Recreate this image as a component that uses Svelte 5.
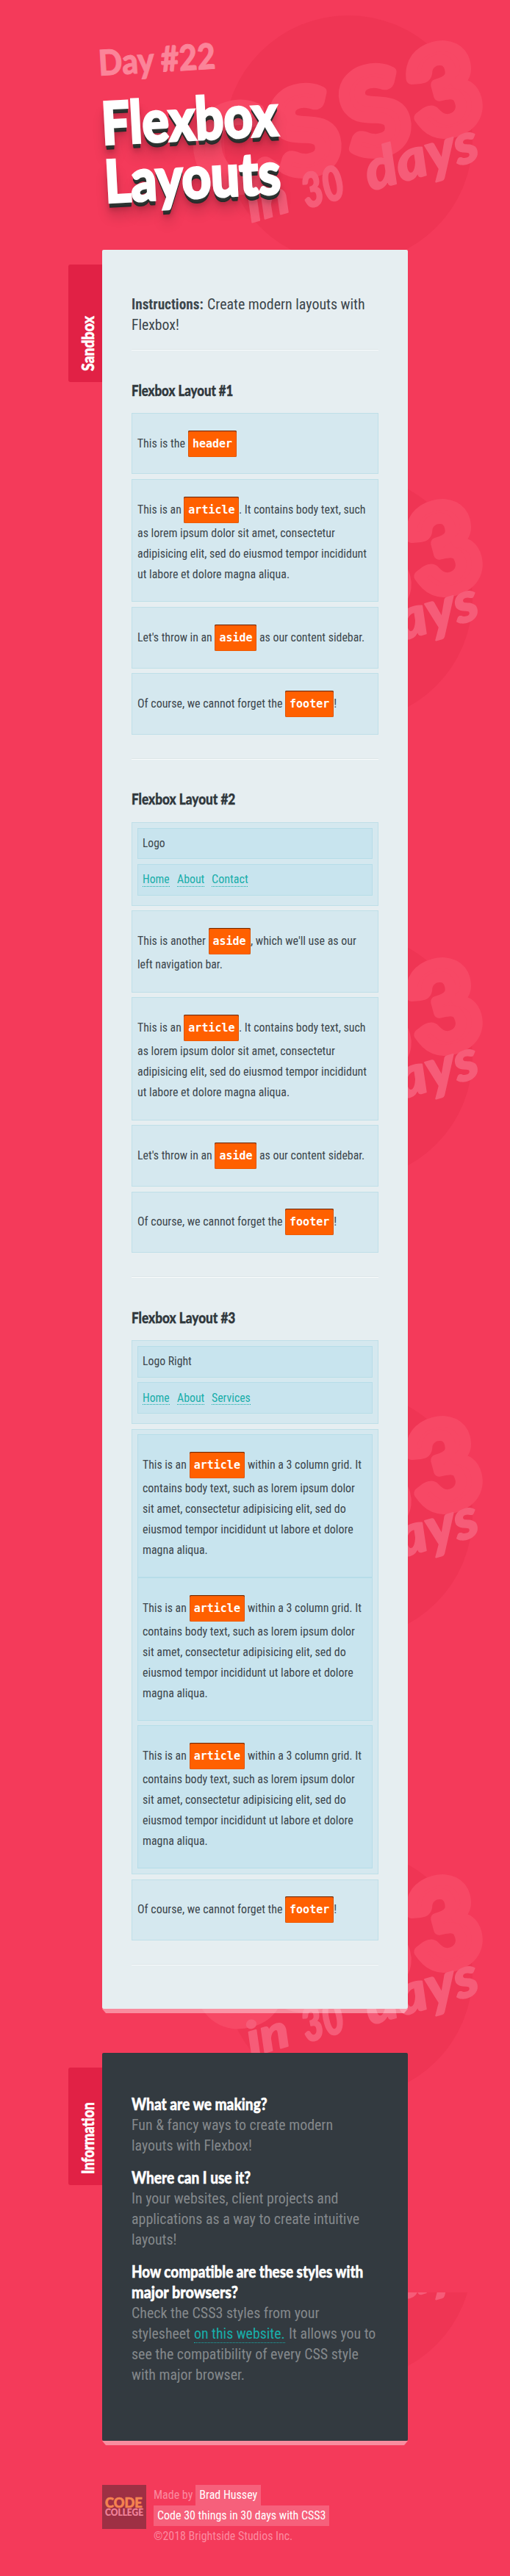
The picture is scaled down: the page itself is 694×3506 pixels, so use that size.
<script lang="ts">
  // Squeezes a run of text to a given width while it stays in the line's flow.
  function fit(node: HTMLElement, width: number) {
    const natural = node.offsetWidth;
    if (!natural) return;
    node.style.transform = `scaleX(${width / natural})`;
    node.style.marginRight = `${width - natural}px`;
  }

  const tiles = [0, 624, 1248, 1872, 2496];

  const article = [
    ['as lorem ipsum dolor sit amet, consectetur', 269],
    ['adipisicing elit, sed do eiusmod tempor incididunt', 312.5],
    ['ut labore et dolore magna aliqua.', 207]
  ];
  const column = [
    ['contains body text, such as lorem ipsum dolor', 289],
    ['sit amet, consectetur adipisicing elit, sed do', 277],
    ['eiusmod tempor incididunt ut labore et dolore', 287],
    ['magna aliqua.', 88.5]
  ];
</script>

{#snippet lead(before, w1, tag, after, w2, gap)}
  <div class="lead">
    <span class="run" use:fit={w1}>{before}</span>
    <code style:width="{tag.length * 9 + 12}px">{tag}</code>
    {#if after}<span class="run" class:gap use:fit={w2}>{after}</span>{/if}
  </div>
{/snippet}

{#snippet lines(list)}
  {#each list as [text, w]}
    <div class="line"><span class="run" use:fit={w}>{text}</span></div>
  {/each}
{/snippet}

{#snippet navHeader(logo, logoW, last, lastW)}
  <div class="box">
    <div class="inner spaced"><div class="line"><span class="run" use:fit={logoW}>{logo}</span></div></div>
    <div class="inner spaced">
      <div class="line nav">
        <a href="#home"><span class="run" use:fit={37}>Home</span></a>
        <a href="#about"><span class="run" use:fit={37.6}>About</span></a>
        <a href="#last"><span class="run" use:fit={lastW}>{last}</span></a>
      </div>
    </div>
  </div>
{/snippet}

{#snippet articleBox()}
  <div class="box text">
    {@render lead('This is an', 60, 'article', '. It contains body text, such', 172, false)}
    {@render lines(article)}
  </div>
{/snippet}

{#snippet asideBox()}
  <div class="box text">
    {@render lead("Let's throw in an", 102, 'aside', 'as our content sidebar.', 143.7, true)}
  </div>
{/snippet}

{#snippet footerBox()}
  <div class="box text">
    {@render lead('Of course, we cannot forget the', 197.3, 'footer', '!', 4, false)}
  </div>
{/snippet}

{#snippet badge()}
  <circle cx="474" cy="190" r="169" fill="#ef3554" />
  <g class="big">
    <text transform="translate(282 270) rotate(-15)">C</text>
    <text transform="translate(388 243) rotate(-15)">S</text>
    <text transform="translate(483 216) rotate(-15)">S</text>
    <text class="three" transform="translate(574 190) rotate(-15)">3</text>
  </g>
  <g class="script">
    <text transform="translate(342 303) rotate(-16)" textLength="58" lengthAdjust="spacingAndGlyphs">in</text>
    <text transform="translate(417 284) rotate(-16)" textLength="58" lengthAdjust="spacingAndGlyphs">30</text>
    <text class="days" transform="translate(504 260) rotate(-16)" textLength="158" lengthAdjust="spacingAndGlyphs">days</text>
  </g>
{/snippet}

<div class="page">
  <svg class="backdrop" width="694" height="3506" viewBox="0 0 694 3506" aria-hidden="true">
    <defs><clipPath id="tail"><rect x="0" y="3120" width="694" height="386" /></clipPath></defs>
    {#each tiles as y}
      <g transform="translate(0 {y})">{@render badge()}</g>
    {/each}
    <g clip-path="url(#tail)"><g transform="translate(0 2882)">{@render badge()}</g></g>
  </svg>

  <header>
    <div class="day"><span class="run" use:fit={159}>Day #22</span></div>
    <h1>
      <span class="row"><span class="run" use:fit={240}>Flexbox</span></span>
      <span class="row second"><span class="run" use:fit={240}>Layouts</span></span>
    </h1>
  </header>

  <section class="card sandbox">
    <div class="tab"><span class="run" use:fit={75}>Sandbox</span></div>
    <div class="intro">
      <div class="line"><b class="run" use:fit={98}>Instructions:</b><span class="run after" use:fit={215}>Create modern layouts with</span></div>
      <div class="line"><span class="run" use:fit={65}>Flexbox!</span></div>
    </div>
    <hr />

    <h2><span class="run" use:fit={138}>Flexbox Layout #1</span></h2>
    <div class="box text">{@render lead('This is the', 65, 'header', '', 0, false)}</div>
    {@render articleBox()}
    {@render asideBox()}
    {@render footerBox()}
    <hr class="rule" />

    <h2><span class="run" use:fit={141}>Flexbox Layout #2</span></h2>
    {@render navHeader('Logo', 31, 'Contact', 49.3)}
    <div class="box text">
      {@render lead('This is another', 93.2, 'aside', ", which we'll use as our", 143.3, false)}
      {@render lines([['left navigation bar.', 116.3]])}
    </div>
    {@render articleBox()}
    {@render asideBox()}
    {@render footerBox()}
    <hr class="rule" />

    <h2><span class="run" use:fit={141}>Flexbox Layout #3</span></h2>
    {@render navHeader('Logo Right', 67, 'Services', 53.3)}
    <div class="box">
      {#each [0, 1, 2] as i}
        <div class="inner text" class:last={i === 2}>
          {@render lead('This is an', 60, 'article', 'within a 3 column grid. It', 155, true)}
          {@render lines(column)}
        </div>
      {/each}
    </div>
    {@render footerBox()}
    <hr class="rule" />
  </section>

  <section class="card info">
    <div class="tab"><span class="run" use:fit={98}>Information</span></div>
    <h3><span class="run" use:fit={185}>What are we making?</span></h3>
    {@render lines([['Fun & fancy ways to create modern', 274.5], ['layouts with Flexbox!', 163.7]])}
    <h3><span class="run" use:fit={161.7}>Where can I use it?</span></h3>
    {@render lines([['In your websites, client projects and', 281], ['applications as a way to create intuitive', 310], ['layouts!', 61.5]])}
    <h3><span class="run" use:fit={315}>How compatible are these styles with</span></h3>
    <h3 class="cont"><span class="run" use:fit={144.5}>major browsers?</span></h3>
    {@render lines([['Check the CSS3 styles from your', 255.3]])}
    <div class="line site">
      <span class="run" use:fit={80}>stylesheet</span>
      <a href="#site"><span class="run" use:fit={124}>on this website.</span></a>
      <span class="run" use:fit={118}>It allows you to</span>
    </div>
    {@render lines([['see the compatibility of every CSS style', 309], ['with major browser.', 154]])}
  </section>

  <footer>
    <div class="logo">
      <div class="code"><span class="run" use:fit={51}>CODE</span></div>
      <div class="college"><span class="run" use:fit={52}>COLLEGE</span></div>
    </div>
    <div class="credits">
      <div class="line"><span class="run" use:fit={53}>Made by</span><span class="chip made"><span class="run" use:fit={79}>Brad Hussey</span></span></div>
      <div class="line"><span class="chip"><span class="run" use:fit={229.6}>Code 30 things in 30 days with CSS3</span></span></div>
      <div class="line"><span class="run" use:fit={189}>©2018 Brightside Studios Inc.</span></div>
    </div>
  </footer>
</div>

<style>
  :global(body) { margin: 0; background: #f43a5a; }
  .page {
    position: relative;
    box-sizing: border-box;
    height: 3506px;
    overflow: hidden;
    background: #f43a5a;
    font-family: 'Roboto Condensed', Roboto, sans-serif;
    font-stretch: 75%;
    color: #3c464c;
  }
  .backdrop { position: absolute; left: 0; top: 0; }
  .big { fill: #f74865; stroke: #f74865; stroke-width: 15px; stroke-linejoin: round; font: 900 154px Lato, sans-serif; }
  .three { font-size: 160px; }
  .script { fill: #f65c78; stroke: #f65c78; stroke-width: 2px; stroke-linejoin: round; font: italic 900 64px Lato, sans-serif; }
  .days { font-size: 76px; }
  .run { display: inline-block; white-space: nowrap; transform-origin: 0 0; }

  header { position: relative; height: 340px; box-sizing: border-box; padding: 57px 0 0 135px; font-family: Lato, sans-serif; font-weight: 900; }
  .day { height: 56px; line-height: 56px; font-size: 48px; color: #fb8499; -webkit-text-stroke: 1px #fb8499; transform: rotate(-3.5deg); transform-origin: 0 80%; }
  h1 {
    margin: 14px 0 0 5px;
    font-size: 80px;
    line-height: 79px;
    font-weight: 900;
    color: #fff;
    -webkit-text-stroke: 3px #fff;
    transform: rotate(-3deg);
    transform-origin: 0 50%;
    text-shadow: 0 1px 0 #2e3532, 0 2px 0 #2e3532, 0 3px 0 #2e3532, 0 4px 0 #2e3532, 0 5px 0 #2b312f, 0 6px 0 #292e2d, 0 7px 0 #262a29, 0 10px 8px rgba(0, 0, 0, .2), 0 18px 18px rgba(0, 0, 0, .2);
  }
  .row { display: block; height: 79px; }

  .card { position: relative; box-sizing: border-box; width: 416px; margin-left: 139px; padding: 0 40px; border-radius: 2px; }
  .card::after {
    content: '';
    position: absolute;
    left: 0; right: 0; top: 100%;
    height: 6px;
    background: rgba(255, 255, 255, .42);
    clip-path: polygon(0 0, 100% 0, calc(100% - 5px) 100%, 5px 100%);
  }
  .sandbox { height: 2394px; padding-top: 60px; background: #e6eef1; }
  .info { height: 528px; margin-top: 60px; padding-top: 56px; background: #333a40; color: #84888b; font-size: 20px; }
  .tab {
    position: absolute;
    left: -46px; top: 180px;
    width: 160px; height: 46px;
    box-sizing: border-box;
    padding: 13px 0 0 15px;
    border-radius: 3px 3px 0 0;
    background: #e12145;
    transform: rotate(-90deg);
    transform-origin: 0 0;
    color: #fff;
    font: 900 22px/28px Lato, sans-serif;
    -webkit-text-stroke: .6px #fff;
  }

  .line { height: 28px; line-height: 28px; display: flex; white-space: nowrap; }
  .intro { font-size: 20px; }
  .after { margin-left: 5px; }
  hr { height: 0; margin: 19px 0 0; border: 0; border-top: 1px solid #dde5e8; border-bottom: 1px solid #f9fbfc; }
  .rule { margin-top: 32.4px; }
  h2 { height: 28px; margin: 39.5px 0 17.5px; font: 900 20px/28px Lato, sans-serif; color: #2f373c; -webkit-text-stroke: .4px #2f373c; }
  .box { box-sizing: border-box; margin-bottom: 6.7px; padding: 6.7px; border: 1px solid #bfdfe8; background: #d5e8ef; font-size: 16px; }
  .box.text { padding: 22.7px 6.7px; }
  .inner { padding: 6.4px; border: 1px solid #b6dde8; background: #c8e4ee; }
  .inner.spaced { margin-bottom: 6.4px; }
  .inner.text { padding: 22.4px 6.4px; }
  .inner.last { margin-top: 6.4px; }
  .lead { display: flex; align-items: baseline; height: 36px; line-height: 28px; white-space: nowrap; }
  code {
    box-sizing: border-box;
    height: 36px;
    margin-left: 4px;
    padding-top: 1px;
    border-radius: 2px;
    background: #ff6000;
    box-shadow: inset 0 0 1px rgba(0, 0, 0, .6), inset 0 1px 1px rgba(0, 0, 0, .6);
    color: #fff;
    font: 700 15px/35px 'DejaVu Sans Mono', monospace;
    font-stretch: normal;
    text-align: center;
  }
  .gap { margin-left: 4px; }
  a { color: #18aeaa; text-decoration: none; }
  .nav { gap: 10px; }
  .nav a { height: 22.5px; border-bottom: 1px dotted #18aeaa; }

  h3 { height: 28px; margin: 16px 0 0; font: 900 22px/28px Lato, sans-serif; color: #fff; -webkit-text-stroke: .5px #fff; }
  .tab + h3, h3.cont { margin-top: 0; }
  .site { gap: 5px; }
  .site a { height: 26px; border-bottom: 1px dotted #18aeaa; }

  footer { position: relative; display: flex; gap: 10px; margin: 60px 0 0 139px; font-size: 16px; color: #fb8aa0; }
  .logo { width: 60px; height: 60px; box-sizing: border-box; padding: 15px 0 0 4px; background: #9e3044; font-family: Lato, sans-serif; font-weight: 900; }
  .code { height: 17px; line-height: 18px; font-size: 18.5px; color: #f58250; -webkit-text-stroke: .7px #f58250; }
  .college { height: 12px; line-height: 12px; font-size: 12.2px; color: #f0839a; -webkit-text-stroke: .2px #f0839a; }
  .chip { height: 28px; padding: 0 5px; background: #f6607b; color: #fff; }
  .made { margin-left: 4px; }
</style>
